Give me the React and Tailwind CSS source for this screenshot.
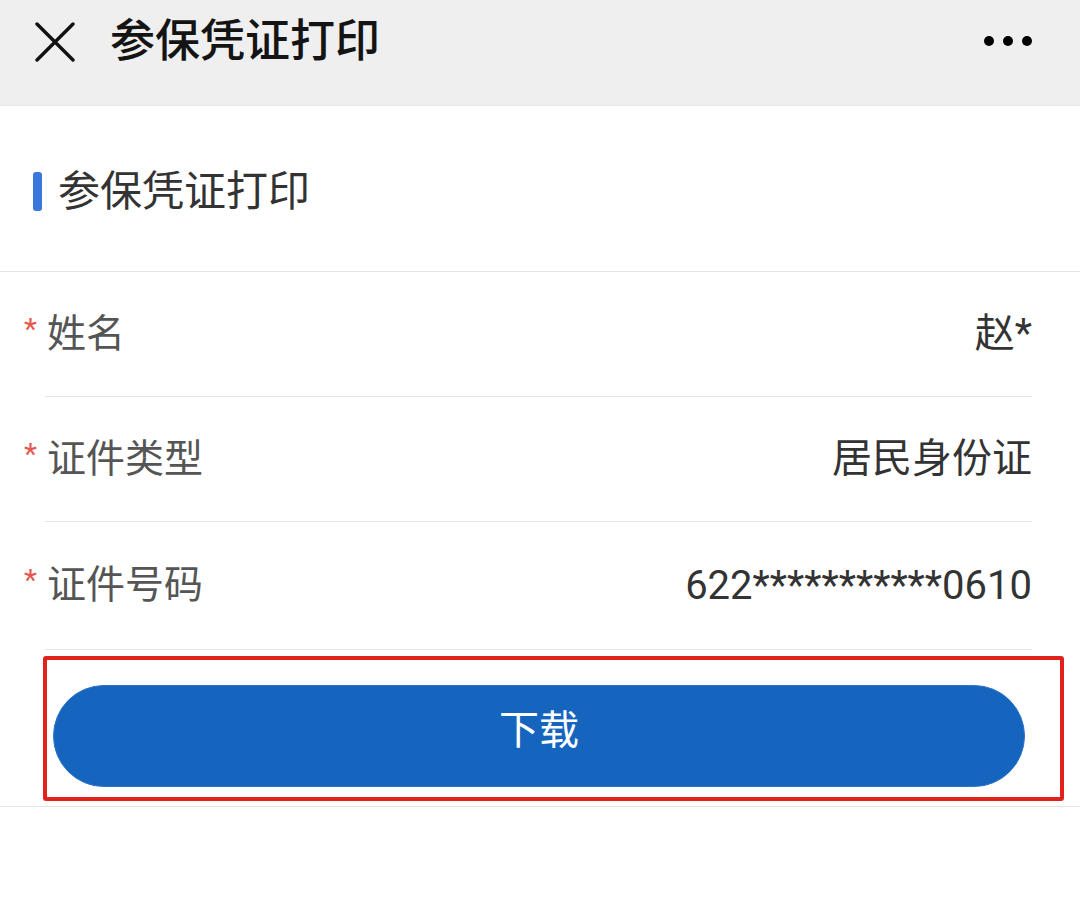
import React from "react";

const rows = [
  { label: "姓名", value: "赵*" },
  { label: "证件类型", value: "居民身份证" },
  { label: "证件号码", value: "622***********0610" },
];

export default function App() {
  return (
    <div className="w-[1080px] h-[919px] bg-white overflow-hidden" style={{ fontFamily: 'Roboto, "Noto Sans CJK SC", sans-serif' }}>
      {/* top bar */}
      <div className="h-[106px] bg-[#efefef] border-b border-[#e8e8e8] flex items-start pt-[22px] pl-[35px] pr-[48px]">
        <svg width="40" height="40" viewBox="0 0 40 40" className="shrink-0">
          <path d="M2 2 L38 38 M38 2 L2 38" stroke="#111" strokeWidth="3.4" strokeLinecap="round" />
        </svg>
        <div className="ml-[35px] text-[45px] leading-none font-medium text-[#141414] -mt-[3px]">参保凭证打印</div>
        <div className="ml-auto mt-[14px] flex items-center gap-[9px]">
          <span className="w-[10px] h-[10px] rounded-full bg-black" />
          <span className="w-[10px] h-[10px] rounded-full bg-black" />
          <span className="w-[10px] h-[10px] rounded-full bg-black" />
        </div>
      </div>

      {/* section heading */}
      <div className="h-[166px] border-b border-[#e3e3e3] flex items-center pl-[33px] pt-[6px]">
        <span className="w-[9px] h-[39px] rounded-[3px] bg-[#3a77db]" />
        <span className="ml-[16px] text-[42px] leading-none text-[#333]">参保凭证打印</span>
      </div>

      {/* form rows */}
      {rows.map((r, i) => (
        <div key={r.label} className="flex pl-[24px] pr-[48px]">
          <span className="w-[21px] self-center text-[30px] leading-none text-[#e4574f] -mt-[12px]">*</span>
          <div className={`flex-1 flex items-center justify-between border-b border-[#e3e3e3] ${i === 2 ? "h-[128px]" : "h-[125px]"}`}>
            <span className="ml-[2px] text-[39px] leading-none text-[#555]">{r.label}</span>
            <span className="text-[40px] leading-none text-[#333]">{r.value}</span>
          </div>
        </div>
      ))}

      {/* download button (highlighted) */}
      <div className="mt-[6px] ml-[43px] w-[1021px] h-[145px] border-4 border-[#e0211c] rounded-[3px] pt-[25px] pl-[6px] pr-[35px]">
        <button className="w-full h-[102px] rounded-full bg-[#1565bf] border border-[#2e74cb] text-white text-[40px] leading-none flex items-center justify-center pb-[10px]">
          下载
        </button>
      </div>
      <div className="mt-[5px] border-t border-[#e3e3e3]" />
    </div>
  );
}
